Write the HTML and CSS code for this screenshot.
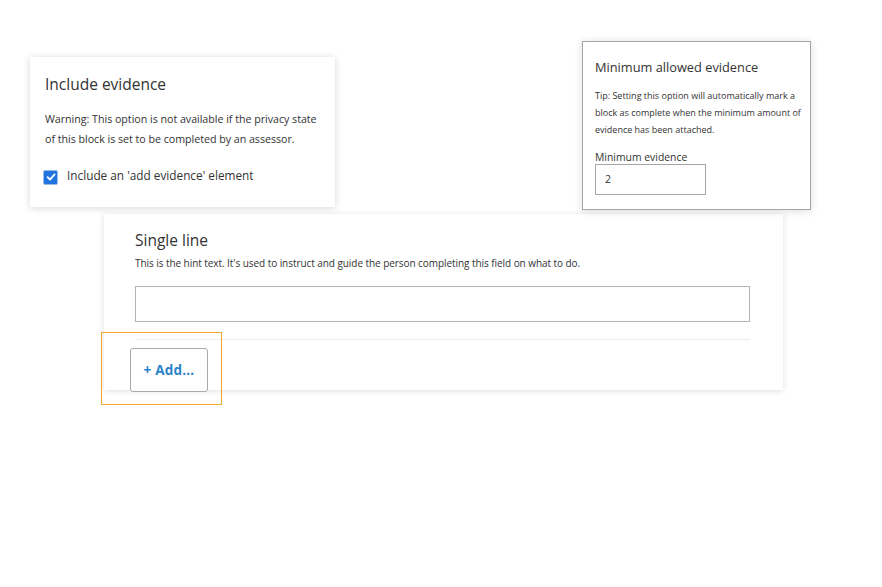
FILE: index.html
```html
<!DOCTYPE html>
<html>
<head>
<meta charset="utf-8">
<link rel="stylesheet" href="styles.css">
</head>
<body>
<div class="canvas">
  <section class="card main-card">
    <h2 class="card-title">Single line</h2>
    <p class="hint">This is the hint text. It's used to instruct and guide the person completing this field on what to do.</p>
    <div class="text-input"></div>
    <hr class="divider">
  </section>

  <section class="panel evidence-panel">
    <h2 class="panel-title">Include evidence</h2>
    <p class="warning">Warning: This option is not available if the privacy state<br>of this block is set to be completed by an assessor.</p>
    <label class="check-row">
      <span class="checkbox">
        <svg width="10" height="10" viewBox="0 0 10 10"><path d="M1.6 5.2 L4 7.6 L8.6 2.4" fill="none" stroke="#fff" stroke-width="1.8" stroke-linecap="round" stroke-linejoin="round"/></svg>
      </span>
      <span>Include an 'add evidence' element</span>
    </label>
  </section>

  <section class="panel min-panel">
    <h2 class="min-title">Minimum allowed evidence</h2>
    <p class="tip">Tip: Setting this option will automatically mark a<br>block as complete when the minimum amount of<br>evidence has been attached.</p>
    <div class="field-label">Minimum evidence</div>
    <div class="num-input">2</div>
  </section>

  <div class="highlight">
    <button class="add-btn">+ Add...</button>
  </div>
</div>
</body>
</html>
```

FILE: styles.css
```css
* { box-sizing: border-box; }
html, body { margin: 0; padding: 0; background: #fff; }
body {
  font-family: "Open Sans", "Noto Sans", sans-serif;
  color: #333;
  width: 882px;
  height: 587px;
  overflow: hidden;
}
.canvas { position: relative; width: 882px; height: 587px; }

.card, .panel { position: absolute; background: #fff; }

.main-card {
  left: 104px; top: 214px; width: 679px; height: 176px;
  box-shadow: 0 1px 6px rgba(0,0,0,0.13);
  padding: 16px 33px 0 31px;
}
.card-title { margin: 0; font-size: 15.5px; font-weight: 400; line-height: 20px; color: #333; }
.hint { margin: 6px 0 0; font-size: 10px; line-height: 14px; color: #333; letter-spacing: -0.06px; white-space: nowrap; }
.text-input { margin-top: 16px; height: 36px; border: 1px solid #b4b4b4; }
.divider { margin: 17px 0 0; border: 0; border-top: 1px solid #ececec; }

.evidence-panel {
  left: 30px; top: 57px; width: 305px; height: 150px;
  box-shadow: 0 1px 7px rgba(0,0,0,0.16);
  padding: 17px 10px 0 15px;
}
.panel-title { margin: 0; font-size: 15.5px; font-weight: 400; line-height: 20px; color: #333; }
.warning { margin: 15px 0 0; font-size: 10.7px; line-height: 20px; color: #333; white-space: nowrap; letter-spacing: -0.03px; }
.check-row { display: flex; align-items: center; gap: 9px; margin-top: 20px; margin-left: -2px; font-size: 11.8px; }
.check-row span:last-child { position: relative; top: -2px; }
.checkbox {
  width: 15px; height: 15px; border-radius: 2px; background: #1f74e0;
  border: 1.5px solid #9bbbe8;
  display: flex; align-items: center; justify-content: center;
}

.min-panel {
  left: 582px; top: 41px; width: 229px; height: 169px;
  border: 1px solid #a6a6a6;
  box-shadow: 0 1px 8px rgba(0,0,0,0.14);
  padding: 17px 6px 0 12px;
}
.min-title { margin: 0; font-size: 12.8px; font-weight: 400; line-height: 17px; color: #333; }
.tip { margin: 11px 0 0; font-size: 9px; line-height: 17px; color: #333; white-space: nowrap; }
.field-label { margin-top: 12px; font-size: 10.4px; line-height: 14px; }
.num-input {
  width: 111px; height: 31px; border: 1px solid #a6a6a6;
  padding-left: 9px; font-size: 10.5px; line-height: 29px;
}

.highlight {
  position: absolute; left: 101px; top: 332px; width: 121px; height: 73px;
  border: 1.5px solid #f0a830;
  padding: 15px 0 0 28px;
}
.add-btn {
  width: 78px; height: 44px; background: #fff;
  border: 1px solid #a9a9a9; border-radius: 3px;
  font-family: "Open Sans", "Noto Sans", sans-serif;
  font-size: 13.5px; font-weight: 700; color: #2b82c9;
  padding: 0; letter-spacing: 0.2px;
}
```
